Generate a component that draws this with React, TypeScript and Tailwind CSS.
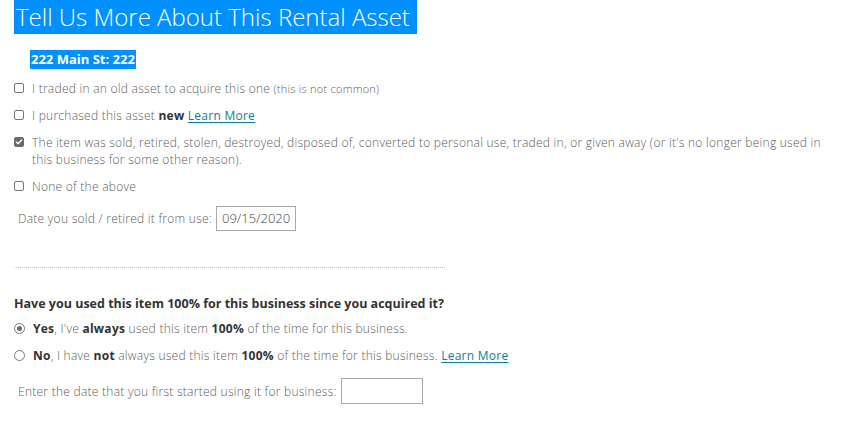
import { Check } from 'lucide-react';

const font = { fontFamily: '"Open Sans", "Liberation Sans", sans-serif' };

function Box({ checked }: { checked?: boolean }) {
  return (
    <span
      className={`mt-[3px] flex h-[10px] w-[10px] shrink-0 items-center justify-center rounded-[2px] border ${
        checked ? 'border-[#6b6b6b] bg-[#6b6b6b]' : 'border-[#767676] bg-white'
      }`}
    >
      {checked && <Check className="h-[8px] w-[8px] text-white" strokeWidth={4} />}
    </span>
  );
}

function Radio({ checked }: { checked?: boolean }) {
  return (
    <span className="mt-[3px] flex h-[11px] w-[11px] shrink-0 items-center justify-center rounded-full border border-[#767676] bg-white">
      {checked && <span className="h-[5px] w-[5px] rounded-full bg-[#6b6b6b]" />}
    </span>
  );
}

const Link = ({ children }: { children: string }) => (
  <a className="text-[#0b8199] underline underline-offset-2 font-normal">{children}</a>
);

export default function App() {
  return (
    <div className="min-h-[421px] w-[846px] bg-white px-[14px] text-[12px] leading-[17px] tracking-[0.26px] text-[#5d5d5d] font-light" style={font}>
      <h1 className="inline-block bg-[#0091ff] pl-[2px] pr-[7px] text-[24px] leading-[34px] tracking-normal font-light text-white">
        Tell Us More About This Rental Asset
      </h1>

      <div className="mt-[16px] pl-[16px]">
        <span className="inline-block bg-[#0091ff] px-[1px] text-[13px] leading-[19px] tracking-normal font-bold text-white">222 Main St: 222</span>
      </div>

      <div className="mt-[11px] flex flex-col gap-[10px]">
        <label className="flex gap-[8px]">
          <Box />
          <span>
            I traded in an old asset to acquire this one <span className="text-[11px]">(this is not common)</span>
          </span>
        </label>
        <label className="flex gap-[8px]">
          <Box />
          <span>
            I purchased this asset <b className="font-bold text-[#333]">new</b> <Link>Learn More</Link>
          </span>
        </label>
        <label className="flex gap-[8px]">
          <Box checked />
          <span>
            The item was sold, retired, stolen, destroyed, disposed of, converted to personal use, traded in, or given away (or it's no longer being used in this business for some other reason).
          </span>
        </label>
        <label className="flex gap-[8px]">
          <Box />
          <span>None of the above</span>
        </label>
      </div>

      <div className="mt-[11px] flex items-center gap-[4px] pl-[4px]">
        <span>Date you sold / retired it from use:</span>
        <div className="flex h-[25px] w-[80px] items-center border border-[#a9a9a9] px-[5px] text-[13px] tracking-normal font-light text-[#444]">
          09/15/2020
        </div>
      </div>

      <div className="mt-[36px] w-[431px] border-t border-dotted border-[#c4c4c4]" />

      <p className="mt-[27px] text-[12.5px] leading-[17px] tracking-normal font-bold text-[#333]">
        Have you used this item 100% for this business since you acquired it?
      </p>

      <div className="mt-[8px] flex flex-col gap-[10px]">
        <label className="flex gap-[8px]">
          <Radio checked />
          <span>
            <b className="font-bold text-[#333]">Yes</b>, I've <b className="font-bold text-[#333]">always</b> used this item{' '}
            <b className="font-bold text-[#333]">100%</b> of the time for this business.
          </span>
        </label>
        <label className="flex gap-[8px]">
          <Radio />
          <span>
            <b className="font-bold text-[#333]">No</b>, I have <b className="font-bold text-[#333]">not</b> always used this item{' '}
            <b className="font-bold text-[#333]">100%</b> of the time for this business. <Link>Learn More</Link>
          </span>
        </label>
      </div>

      <div className="mt-[14px] flex items-center gap-[4px] pl-[4px]">
        <span>Enter the date that you first started using it for business:</span>
        <div className="h-[26px] w-[82px] border border-[#a9a9a9]" />
      </div>
    </div>
  );
}
